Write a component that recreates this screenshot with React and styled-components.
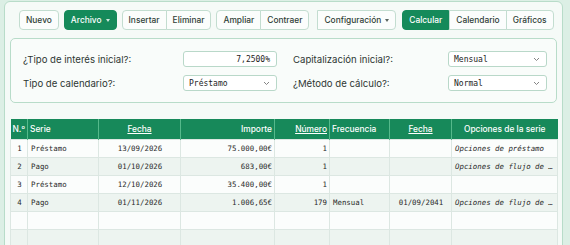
import styled, { createGlobalStyle } from 'styled-components';

const Global = createGlobalStyle`
  body {
    margin: 0;
    background: #dcefe5;
    font-family: Inter, 'Noto Sans', sans-serif;
    overflow: hidden;
  }
`;

const Page = styled.div`
  padding: 1px 7px 0 4px;
`;

const Card = styled.div`
  background: #f5faf7;
  border: 1px solid #b8dcc9;
  border-radius: 6px;
  padding: 8px 5px 10px 5px;
  height: 260px;
`;

const Toolbar = styled.div`
  display: flex;
  align-items: center;
  padding-left: 9px;
  gap: 5px;
  margin-bottom: 8px;
`;

const Group = styled.div`
  display: flex;
  margin-left: ${(p) => p.ml || 0}px;
`;

const Btn = styled.button`
  font-family: Inter, sans-serif;
  font-size: 8.4px;
  font-weight: 500;
  height: 20px;
  margin: 0;
  padding: 0 6px;
  border: 1px solid ${(p) => (p.active ? '#158a5a' : '#c3ddd0')};
  background: ${(p) => (p.active ? '#158a5a' : '#fbfdfc')};
  color: ${(p) => (p.active ? '#fff' : '#2f3d37')};
  border-radius: 4px;
  display: flex;
  align-items: center;
  gap: 4px;
  cursor: pointer;

  ${Group} > & {
    border-radius: 0;
  }
  ${Group} > &:first-child {
    border-radius: 4px 0 0 4px;
  }
  ${Group} > &:last-child {
    border-radius: 0 4px 4px 0;
  }
  ${Group} > & + & {
    margin-left: -1px;
  }
`;

const Caret = styled.span`
  width: 0;
  height: 0;
  border-left: 2.5px solid transparent;
  border-right: 2.5px solid transparent;
  border-top: 3px solid currentColor;
  opacity: 0.8;
`;

const Panel = styled.div`
  display: grid;
  grid-template-columns: 1fr 1fr;
  column-gap: 16px;
  row-gap: 8px;
  background: #f9fcfa;
  border: 1px solid #b8dcc9;
  border-radius: 5px;
  padding: 12px 9px 11px 12px;
`;

const Field = styled.div`
  display: flex;
  align-items: center;
  justify-content: space-between;
`;

const Label = styled.label`
  font-size: 9.6px;
  color: #2e3733;
`;

const Input = styled.div`
  box-sizing: border-box;
  width: ${(p) => p.w}px;
  height: 16px;
  border: 1px solid #b9d8c9;
  border-radius: 3px;
  background: #fff;
  font-family: 'DejaVu Sans Mono', monospace;
  font-size: 8px;
  color: #222;
  display: flex;
  align-items: center;
  justify-content: ${(p) => (p.right ? 'flex-end' : 'space-between')};
  padding: 0 6px 0 5px;
`;

const Chevron = () => (
  <svg width="7" height="5" viewBox="0 0 7 5">
    <path d="M1 1l2.5 2.5L6 1" fill="none" stroke="#777" strokeWidth="0.9" />
  </svg>
);

const Table = styled.table`
  margin-top: 16px;
  width: 547px;
  border-collapse: collapse;
  table-layout: fixed;
`;

const Th = styled.th`
  background: #17895a;
  color: #fff;
  font-weight: 500;
  font-size: 8.4px;
  height: 20px;
  padding: 0 2px;
  text-align: ${(p) => p.align || 'left'};
  border-left: 1px solid #55b98b;
  text-decoration: ${(p) => (p.u ? 'underline' : 'none')};
  white-space: nowrap;
  &:first-child {
    border-left: none;
  }
`;

const Tr = styled.tr`
  background: ${(p) => (p.odd ? '#edf4f0' : '#fbfdfc')};
`;

const Td = styled.td`
  height: 17px;
  padding: 0 2px 0 3px;
  border: 1px solid #dce7e2;
  font-family: 'DejaVu Sans Mono', monospace;
  font-size: 7.4px;
  font-style: ${(p) => (p.it ? 'italic' : 'normal')};
  color: #2a2a2a;
  text-align: ${(p) => p.align || 'left'};
  white-space: nowrap;
  overflow: hidden;
  text-overflow: ellipsis;
`;

const cols = [17, 71, 82, 94, 55, 60, 62, 106];

const rows = [
  ['1', 'Préstamo', '13/09/2026', '75.000,00€', '1', '', '', 'Opciones de préstamo'],
  ['2', 'Pago', '01/10/2026', '683,00€', '1', '', '', 'Opciones de flujo de efectivo'],
  ['3', 'Préstamo', '12/10/2026', '35.400,00€', '1', '', '', ''],
  ['4', 'Pago', '01/11/2026', '1.006,65€', '179', 'Mensual', '01/09/2041', 'Opciones de flujo de efectivo'],
  ['', '', '', '', '', '', '', ''],
  ['', '', '', '', '', '', '', ''],
];

const aligns = ['center', 'left', 'center', 'right', 'right', 'left', 'center', 'left'];

export default function App() {
  return (
    <Page>
      <Global />
      <Card>
        <Toolbar>
          <Btn>Nuevo</Btn>
          <Btn active>
            Archivo <Caret />
          </Btn>
          <Group>
            <Btn>Insertar</Btn>
            <Btn>Eliminar</Btn>
          </Group>
          <Group>
            <Btn>Ampliar</Btn>
            <Btn>Contraer</Btn>
          </Group>
          <Group ml={3}>
            <Btn>
              Configuración <Caret />
            </Btn>
          </Group>
          <Group ml={1}>
            <Btn active>Calcular</Btn>
            <Btn>Calendario</Btn>
            <Btn>Gráficos</Btn>
          </Group>
        </Toolbar>

        <Panel>
          <Field>
            <Label>¿Tipo de interés inicial?:</Label>
            <Input w={94} right>7,2500%</Input>
          </Field>
          <Field>
            <Label>Capitalización inicial?:</Label>
            <Input w={99}>
              Mensual <Chevron />
            </Input>
          </Field>
          <Field>
            <Label>Tipo de calendario?:</Label>
            <Input w={94}>
              Préstamo <Chevron />
            </Input>
          </Field>
          <Field>
            <Label>¿Método de cálculo?:</Label>
            <Input w={99}>
              Normal <Chevron />
            </Input>
          </Field>
        </Panel>

        <Table>
          <colgroup>
            {cols.map((w, i) => (
              <col key={i} style={{ width: w }} />
            ))}
          </colgroup>
          <thead>
            <tr>
              <Th>N.º</Th>
              <Th>Serie</Th>
              <Th align="center" u>Fecha</Th>
              <Th align="right">Importe</Th>
              <Th align="right" u>Número</Th>
              <Th>Frecuencia</Th>
              <Th align="center" u>Fecha</Th>
              <Th align="center">Opciones de la serie</Th>
            </tr>
          </thead>
          <tbody>
            {rows.map((r, i) => (
              <Tr key={i} odd={i % 2 === 1}>
                {r.map((c, j) => (
                  <Td key={j} align={aligns[j]} it={j === 7}>
                    {c}
                  </Td>
                ))}
              </Tr>
            ))}
          </tbody>
        </Table>
      </Card>
    </Page>
  );
}
